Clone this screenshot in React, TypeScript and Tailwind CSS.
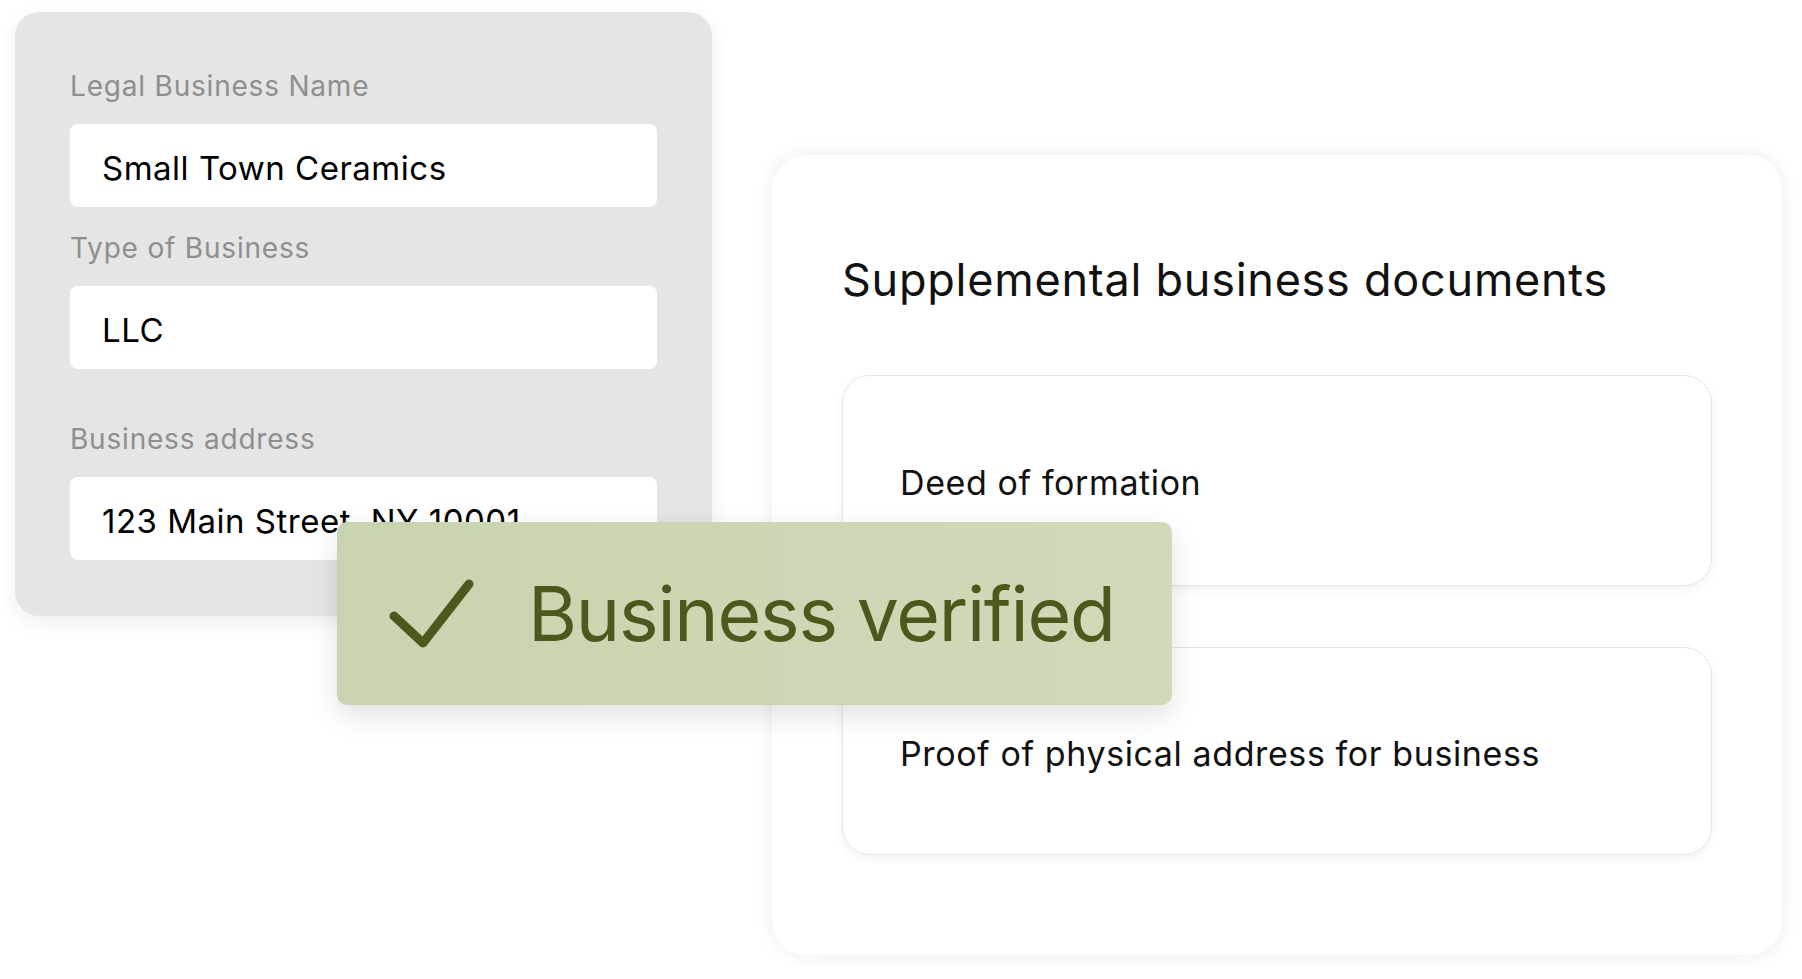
import React from 'react';

const font = { fontFamily: 'Inter, "Noto Sans", sans-serif' };

function Field({ label, value, gapTop }: { label: string; value: string; gapTop: string }) {
    return (
        <div className={gapTop}>
            <div className="h-[34px] text-[28px] leading-[34px] tracking-[0.8px] text-[#8e8f8e]">{label}</div>
            <div className="mt-[21px] flex h-[83px] items-center rounded-[8px] bg-white pl-[32px] pt-[6px] text-[33px] tracking-[0.5px] text-black">
                {value}
            </div>
        </div>
    );
}

function DocRow({ title, height }: { title: string; height: string }) {
    return (
        <div
            className={`${height} flex items-center rounded-[28px] border border-[#e6e6e6] bg-white pl-[57px] pt-[4px] text-[34px] tracking-[0.6px] text-[#111] shadow-[0_3px_10px_rgba(0,0,0,0.06)]`}
        >
            {title}
        </div>
    );
}

export default function App() {
    return (
        <div className="relative h-[979px] w-[1802px] overflow-hidden bg-white" style={font}>
            <div className="flex items-start">
                {/* business details form */}
                <div className="ml-[15px] mt-[12px] w-[697px] rounded-[24px] bg-[#e4e5e4] px-[55px] pb-[56px] pt-[57px] shadow-[0_6px_20px_rgba(0,0,0,0.07)]">
                    <Field label="Legal Business Name" value="Small Town Ceramics" gapTop="" />
                    <Field label="Type of Business" value="LLC" gapTop="mt-[24px]" />
                    <Field label="Business address" value="123 Main Street, NY 10001" gapTop="mt-[53px]" />
                </div>

                {/* documents */}
                <div className="ml-[60px] mt-[155px] w-[1010px] rounded-[34px] bg-white px-[70px] pb-[100px] pt-[98px] shadow-[0_0_18px_rgba(0,0,0,0.08)]">
                    <h2 className="h-[54px] text-[45px] font-normal leading-[54px] tracking-[0.75px] text-[#111]">
                        Supplemental business documents
                    </h2>
                    <div className="mt-[68px] flex flex-col gap-[61px]">
                        <DocRow title="Deed of formation" height="h-[211px]" />
                        <DocRow title="Proof of physical address for business" height="h-[208px]" />
                    </div>
                </div>
            </div>

            {/* verified badge */}
            <div className="absolute left-[337px] top-[522px] flex h-[183px] w-[835px] items-center rounded-[10px] bg-linear-to-r from-[#c8d3af] to-[#d0dab9] pl-[51px] shadow-[0_10px_28px_rgba(0,0,0,0.12)]">
                <svg width="90" height="76" viewBox="0 0 90 76" fill="none">
                    <path d="M6 40 L35 67 L81 8" stroke="#4a5a1c" strokeWidth="9" strokeLinecap="round" strokeLinejoin="round" />
                </svg>
                <span className="ml-[50px] text-[75px] leading-none tracking-[-1.2px] text-[#4a5a1c]">Business verified</span>
            </div>
        </div>
    );
}
